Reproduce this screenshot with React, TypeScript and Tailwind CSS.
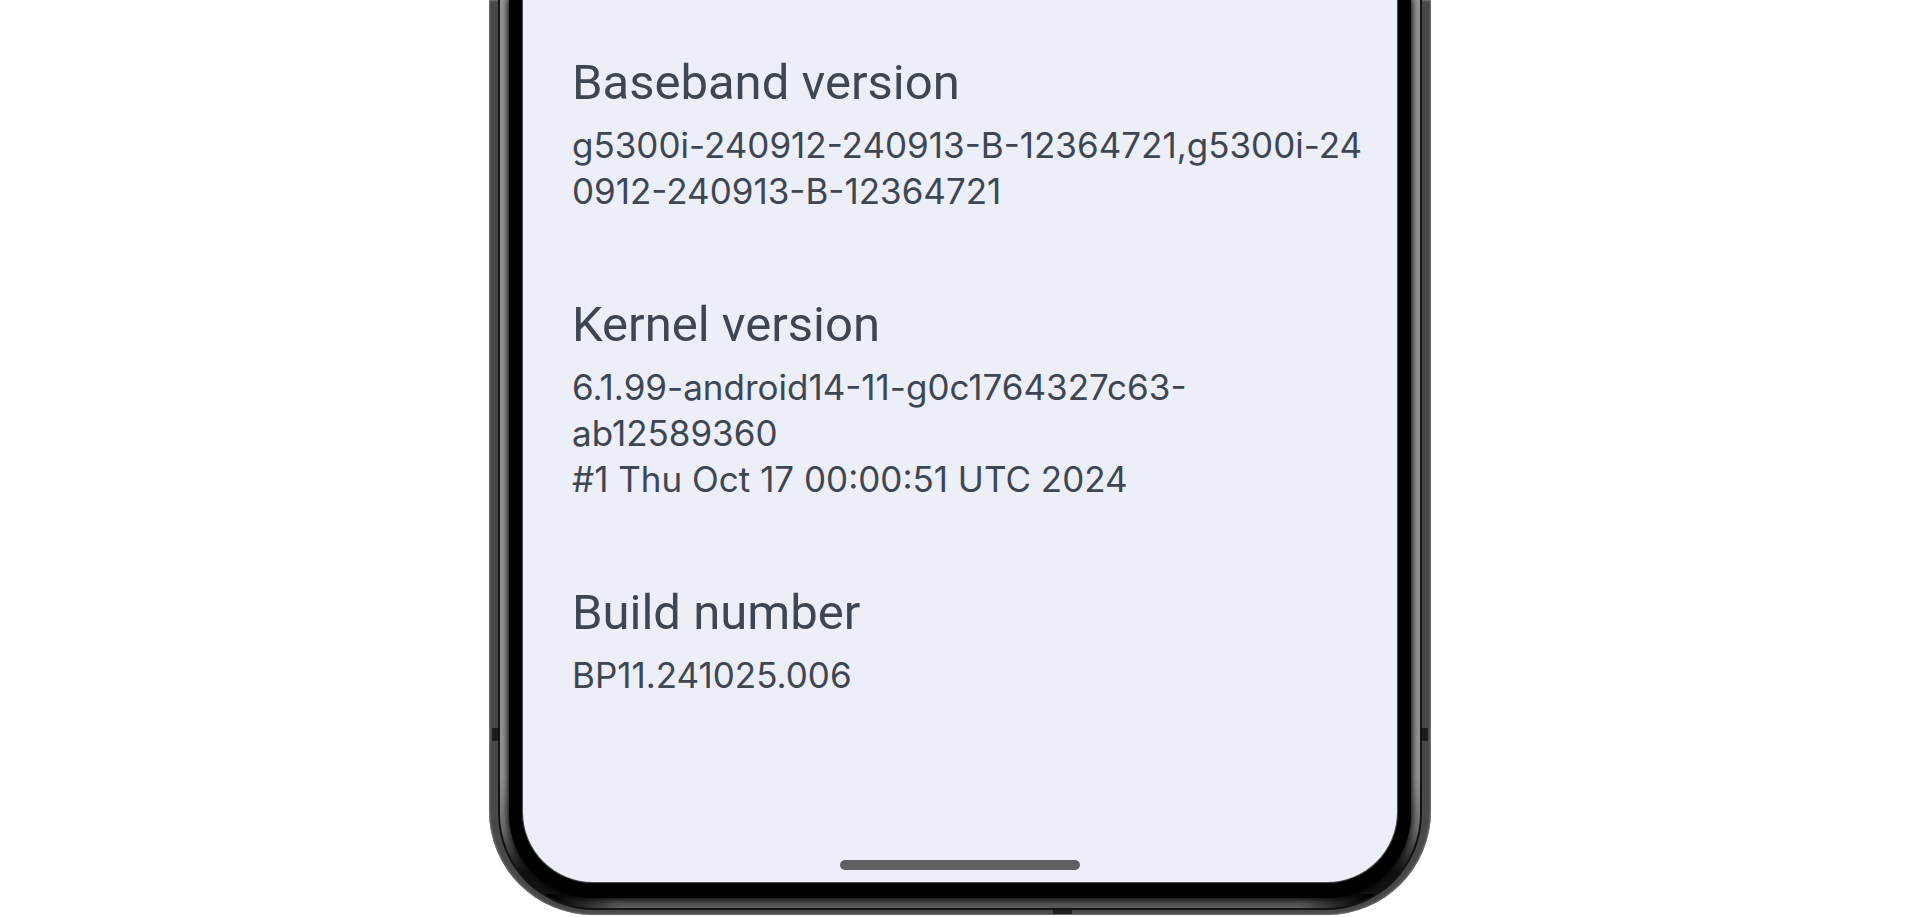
interface Detail {
  title: string;
  lines: string[];
}

const details: Detail[] = [
  {
    title: "Baseband version",
    lines: ["g5300i-240912-240913-B-12364721,g5300i-24", "0912-240913-B-12364721"],
  },
  {
    title: "Kernel version",
    lines: [
      "6.1.99-android14-11-g0c1764327c63-",
      "ab12589360",
      "#1 Thu Oct 17 00:00:51 UTC 2024",
    ],
  },
  { title: "Build number", lines: ["BP11.241025.006"] },
];

function DetailItem({ title, lines }: Detail) {
  return (
    <section className="flex flex-col gap-2">
      <h2 className="text-[49px] leading-[62px]">{title}</h2>
      <p className="font-['Inter',sans-serif] text-[35px] leading-[46px]">
        {lines.map((line) => (
          <span key={line} className="block">
            {line}
          </span>
        ))}
      </p>
    </section>
  );
}

function Screen() {
  return (
    <main className="flex flex-col rounded-b-[70px] bg-[#eceef8] pt-[52px] pb-3 text-[#3e4653] shadow-[0_0_1px_1px_#555]">
      <div className="flex flex-col gap-20 pr-6 pl-[49px]">
        {details.map((detail) => (
          <DetailItem key={detail.title} {...detail} />
        ))}
      </div>
      <div className="mx-auto mt-[162px] h-[10px] w-[240px] rounded-full bg-[#5f6064]" />
    </main>
  );
}

export default function App() {
  return (
    <div className="flex min-h-screen items-start justify-center bg-white font-['Roboto',sans-serif]">
      {/* Metal rail */}
      <div className="relative w-full max-w-[942px] rounded-b-[104px] bg-[#484848] px-[9px] pb-[5px] shadow-[inset_0_0_2px_1px_#777]">
        <span className="absolute bottom-[174px] left-[3px] h-[13px] w-[7px] bg-[#1c1c1c]" />
        <span className="absolute right-[3px] bottom-[174px] h-[13px] w-[7px] bg-[#1c1c1c]" />
        <span className="absolute right-[359px] bottom-[1px] h-[5px] w-[19px] bg-[#1f1f1f]" />
        {/* Seam between the rail and the glass */}
        <div className="relative rounded-b-[96px] bg-[#141414] px-[2px] pb-[2px]">
          {/* Glass edge: light on the sides, dark in the corners */}
          <div className="rounded-b-[94px] bg-[linear-gradient(to_right,#000_50px,transparent_120px,transparent_calc(100%-120px),#000_calc(100%-50px)),linear-gradient(#444,#5c5c5c)] bg-[length:100%_14px] bg-bottom bg-no-repeat">
            <div className="rounded-b-[94px] bg-[linear-gradient(to_bottom,#929292_calc(100%-130px),#6c6c6c_calc(100%-80px),#111_calc(100%-36px),transparent_calc(100%-14px))] px-[9px] pb-[10px]">
              <div className="rounded-b-[84px] bg-black px-[14px] pb-[16px] shadow-[0_0_6px_1px_#000]">
                <Screen />
              </div>
            </div>
          </div>
        </div>
      </div>
    </div>
  );
}
